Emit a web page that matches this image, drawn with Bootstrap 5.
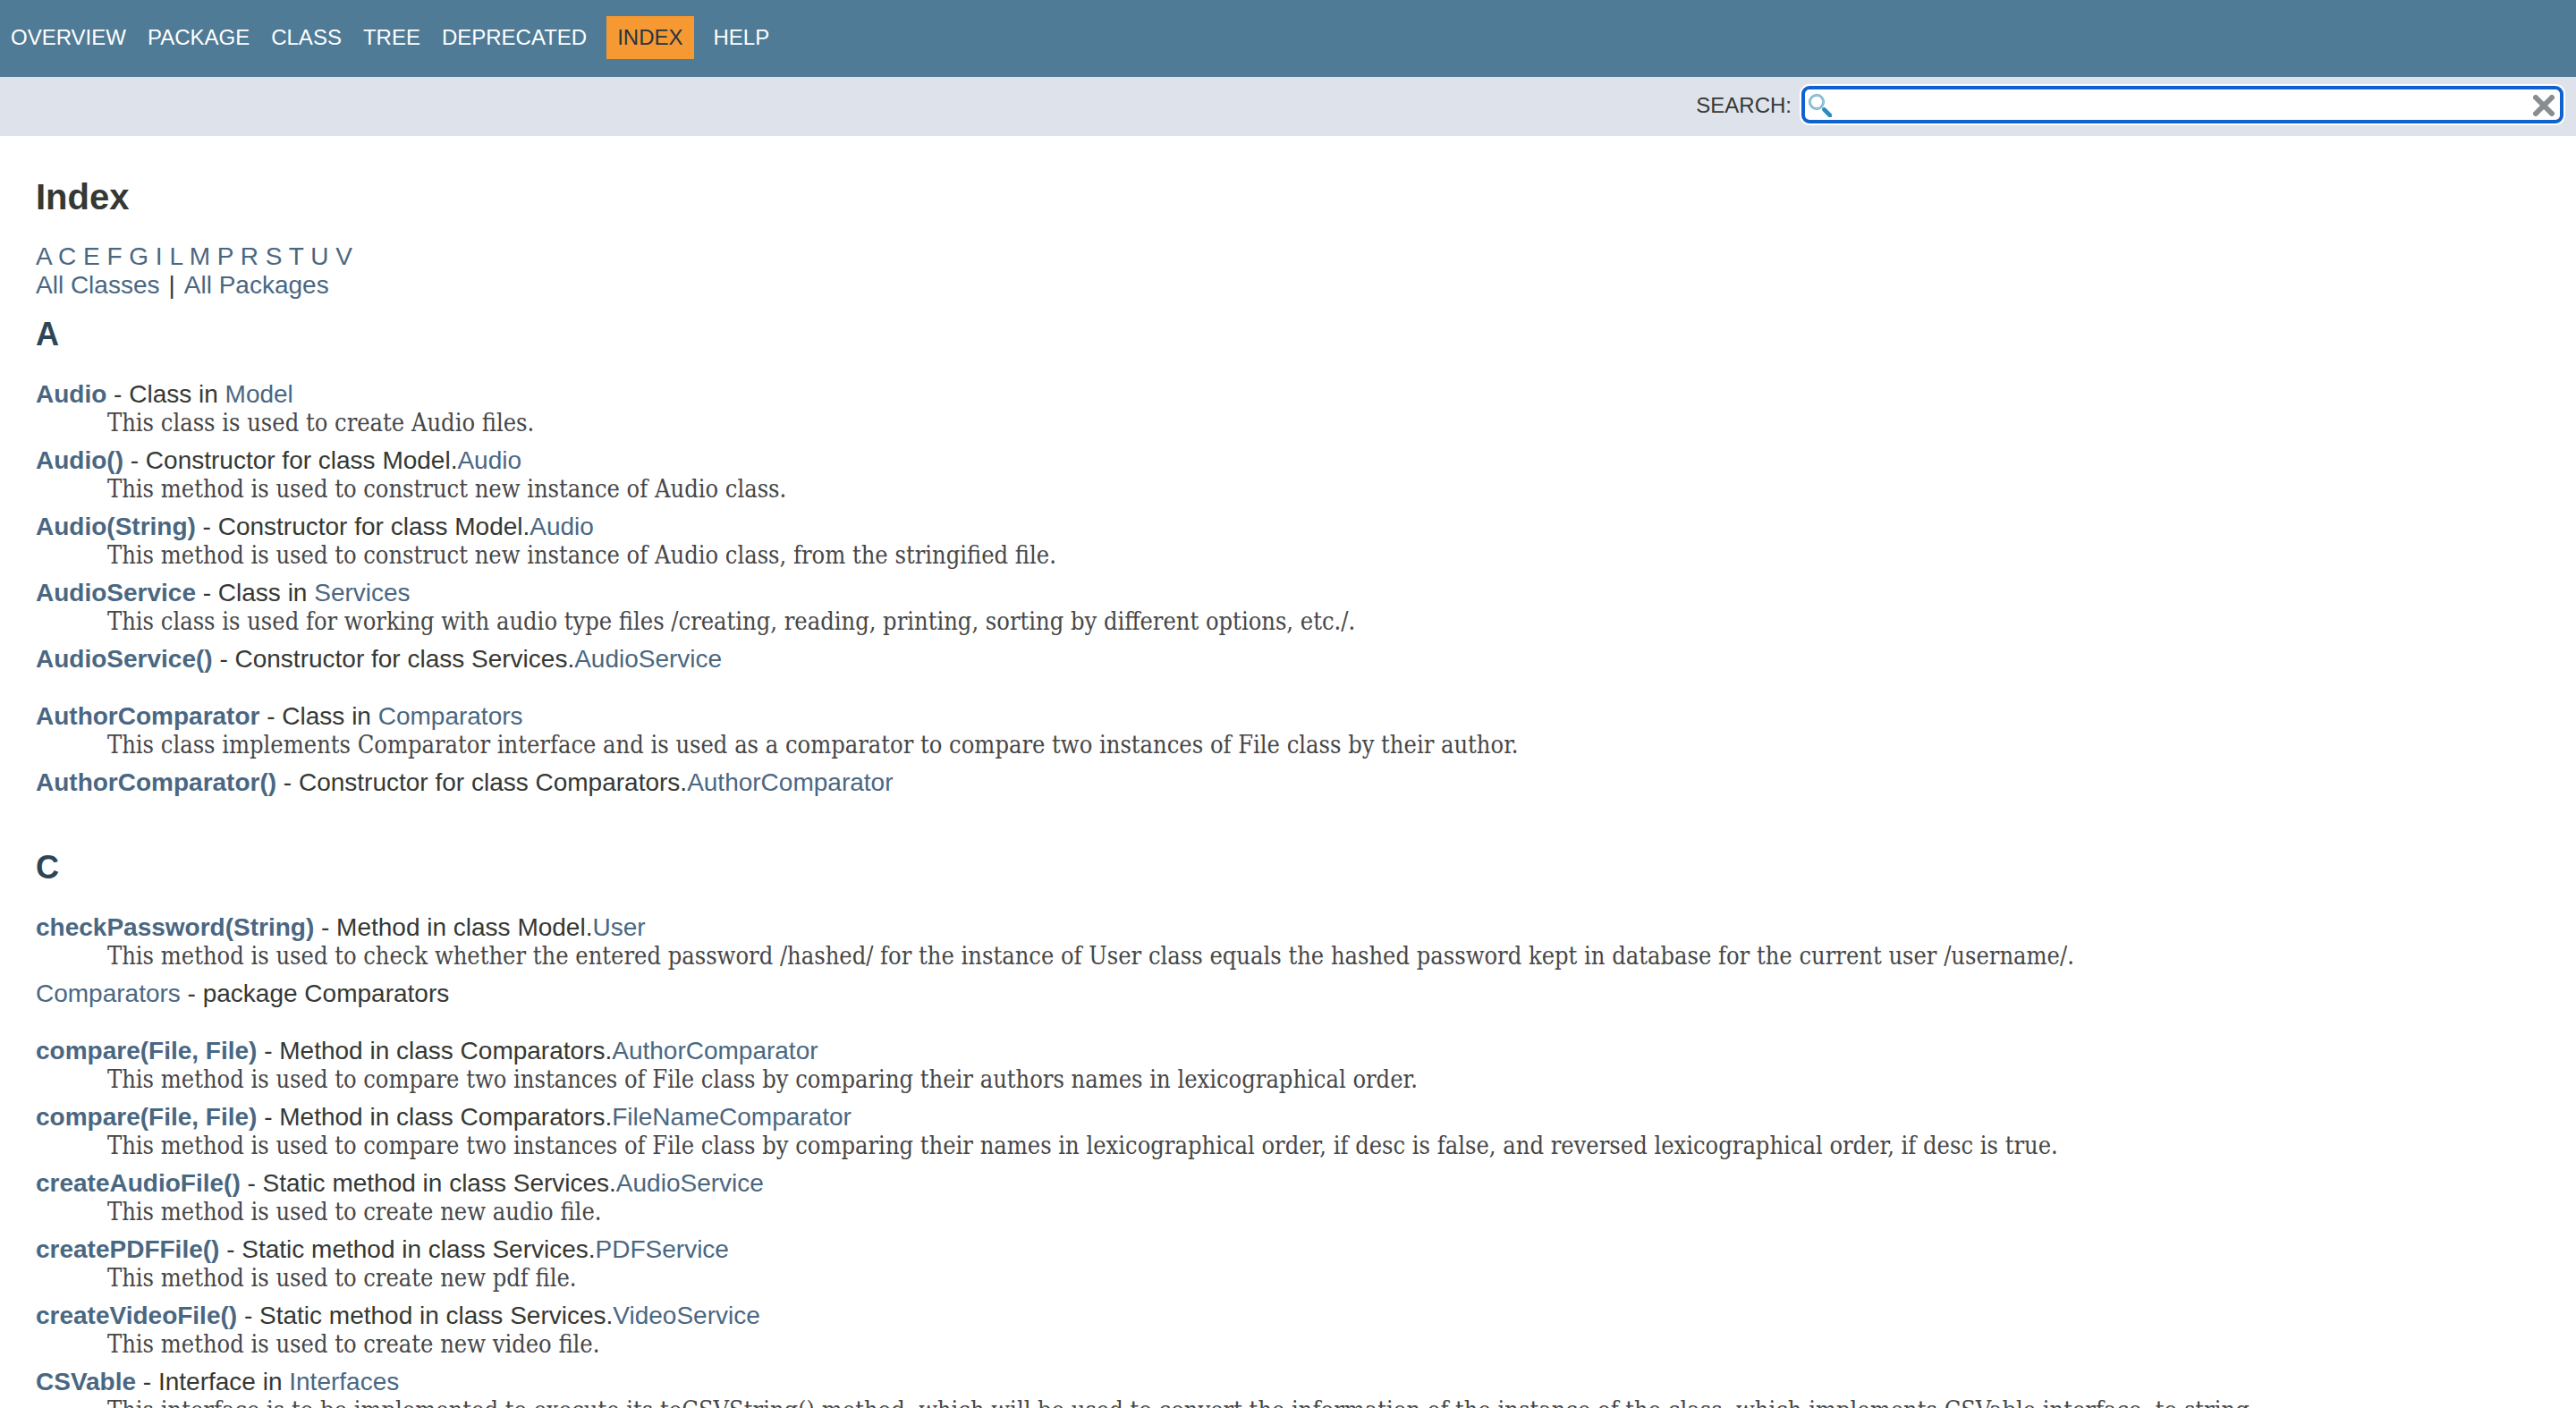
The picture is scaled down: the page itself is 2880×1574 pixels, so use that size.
<!DOCTYPE html>
<html lang="en">
<head>
<meta charset="utf-8">
<meta name="viewport" content="width=device-width, initial-scale=1">
<title>Index</title>
<link href="https://cdn.jsdelivr.net/npm/bootstrap@5.3.0/dist/css/bootstrap.min.css" rel="stylesheet">
<style>
body { font-family: "Liberation Sans", Arial, sans-serif; font-size: 28px; line-height: 32px; color: #353833; }
a { color: #4a6782; text-decoration: none; }
a:hover { color: #bb7a2a; }
.top-nav { background: #4f7b96; height: 86px; padding-top: 18px; font-size: 24px; line-height: 28px; }
.top-nav .nav-link { color: #fff; padding: 10px 12px; }
.top-nav .nav-link.active { background: #f69932; color: #253441; margin: 0 10px; }
.sub-nav { background: #dee2ea; height: 66px; padding: 10px 14px 14px; font-size: 24px; line-height: 28px; }
.sub-nav label { margin-right: 11px; padding-top: 2px; }
.search-field { width: 852px; height: 42px; border: 4px solid #0f62d0; border-radius: 9px; background: #fff; box-shadow: 0 0 0 2px #fff; padding: 2px 6px 0 4px; }
.search-field input { border: 0; outline: 0; background: transparent; min-width: 0; font-size: 26px; height: 30px; }
.doc-body { padding: 45px 40px 20px; scrollbar-width: none; }
.doc-body::-webkit-scrollbar { display: none; }
h1 { font-size: 40px; line-height: 46px; font-weight: 700; margin: 0 0 28px; }
h2 { font-size: 36px; line-height: 42px; font-weight: 700; color: #2c4557; margin: 0 0 30px; }
.letter-group { margin-top: 18px; }
.letter-group + .letter-group { margin-top: 36px; }
.sep { margin: 0 10px; }
dl { margin: 0; }
dt { font-weight: 400; }
dt b { font-weight: 700; }
dd { margin: 0 0 10px 80px; min-height: 22px; font-family: "DejaVu Serif Condensed", "Liberation Serif", serif; font-size: 27px; color: #474747; }
</style>
<script src="https://cdn.jsdelivr.net/npm/bootstrap@5.3.0/dist/js/bootstrap.bundle.min.js"></script>
</head>
<body class="vh-100 d-flex flex-column overflow-hidden bg-white">
<header class="flex-shrink-0">
  <nav class="top-nav" aria-label="Main">
    <ul class="nav">
      <li><a class="nav-link" href="#">OVERVIEW</a></li>
      <li><a class="nav-link" href="#">PACKAGE</a></li>
      <li><a class="nav-link" href="#">CLASS</a></li>
      <li><a class="nav-link" href="#">TREE</a></li>
      <li><a class="nav-link" href="#">DEPRECATED</a></li>
      <li><a class="nav-link active" href="#" aria-current="page">INDEX</a></li>
      <li><a class="nav-link" href="#">HELP</a></li>
    </ul>
  </nav>
  <form class="sub-nav d-flex align-items-center justify-content-end">
    <label for="search">SEARCH:</label>
    <div class="search-field d-flex align-items-center">
      <svg width="26" height="26" viewBox="0 0 26 26" fill="none" aria-hidden="true">
        <path d="M15.5 15.5l2 2" stroke="#9cc3d6" stroke-width="2"/>
        <circle cx="9" cy="9" r="7.6" stroke="#6fafca" stroke-width="2.8"/>
        <circle cx="9" cy="9" r="7.6" stroke="#a9cddd" stroke-width="1"/>
        <path d="M17.5 17.5l6.5 6.5" stroke="#2b8abf" stroke-width="4.6" stroke-linecap="round"/>
      </svg>
      <input id="search" type="text" class="flex-grow-1" autocomplete="off">
      <button type="reset" class="btn p-0 border-0 d-flex" aria-label="Clear">
        <svg width="24" height="24" viewBox="0 0 24 24" fill="none" aria-hidden="true">
          <path d="M3 3l18 18M21 3L3 21" stroke="#878d91" stroke-width="6" stroke-linecap="round"/>
        </svg>
      </button>
    </div>
  </form>
</header>
<main class="doc-body flex-grow-1 overflow-auto">
  <h1>Index</h1>
  <div><a href="#A">A</a> <a href="#C">C</a> <a href="#E">E</a> <a href="#F">F</a> <a href="#G">G</a> <a href="#I">I</a> <a href="#L">L</a> <a href="#M">M</a> <a href="#P">P</a> <a href="#R">R</a> <a href="#S">S</a> <a href="#T">T</a> <a href="#U">U</a> <a href="#V">V</a></div>
  <div><a href="#">All Classes</a><span class="sep">|</span><a href="#">All Packages</a></div>
  <section class="letter-group" id="A">
    <h2>A</h2>
    <dl>
      <dt><a href="#"><b>Audio</b></a> - Class in <a href="#">Model</a></dt>
      <dd>This class is used to create Audio files.</dd>
      <dt><a href="#"><b>Audio()</b></a> - Constructor for class Model.<a href="#">Audio</a></dt>
      <dd>This method is used to construct new instance of Audio class.</dd>
      <dt><a href="#"><b>Audio(String)</b></a> - Constructor for class Model.<a href="#">Audio</a></dt>
      <dd>This method is used to construct new instance of Audio class, from the stringified file.</dd>
      <dt><a href="#"><b>AudioService</b></a> - Class in <a href="#">Services</a></dt>
      <dd>This class is used for working with audio type files /creating, reading, printing, sorting by different options, etc./.</dd>
      <dt><a href="#"><b>AudioService()</b></a> - Constructor for class Services.<a href="#">AudioService</a></dt>
      <dd></dd>
      <dt><a href="#"><b>AuthorComparator</b></a> - Class in <a href="#">Comparators</a></dt>
      <dd>This class implements Comparator interface and is used as a comparator to compare two instances of File class by their author.</dd>
      <dt><a href="#"><b>AuthorComparator()</b></a> - Constructor for class Comparators.<a href="#">AuthorComparator</a></dt>
      <dd></dd>
    </dl>
  </section>
  <section class="letter-group" id="C">
    <h2>C</h2>
    <dl>
      <dt><a href="#"><b>checkPassword(String)</b></a> - Method in class Model.<a href="#">User</a></dt>
      <dd>This method is used to check whether the entered password /hashed/ for the instance of User class equals the hashed password kept in database for the current user /username/.</dd>
      <dt><a href="#">Comparators</a> - package Comparators</dt>
      <dd></dd>
      <dt><a href="#"><b>compare(File, File)</b></a> - Method in class Comparators.<a href="#">AuthorComparator</a></dt>
      <dd>This method is used to compare two instances of File class by comparing their authors names in lexicographical order.</dd>
      <dt><a href="#"><b>compare(File, File)</b></a> - Method in class Comparators.<a href="#">FileNameComparator</a></dt>
      <dd>This method is used to compare two instances of File class by comparing their names in lexicographical order, if desc is false, and reversed lexicographical order, if desc is true.</dd>
      <dt><a href="#"><b>createAudioFile()</b></a> - Static method in class Services.<a href="#">AudioService</a></dt>
      <dd>This method is used to create new audio file.</dd>
      <dt><a href="#"><b>createPDFFile()</b></a> - Static method in class Services.<a href="#">PDFService</a></dt>
      <dd>This method is used to create new pdf file.</dd>
      <dt><a href="#"><b>createVideoFile()</b></a> - Static method in class Services.<a href="#">VideoService</a></dt>
      <dd>This method is used to create new video file.</dd>
      <dt><a href="#"><b>CSVable</b></a> - Interface in <a href="#">Interfaces</a></dt>
      <dd>This interface is to be implemented to execute its toCSVString() method, which will be used to convert the information of the instance of the class, which implements CSVable interface, to string.</dd>
    </dl>
  </section>
</main>
</body>
</html>
